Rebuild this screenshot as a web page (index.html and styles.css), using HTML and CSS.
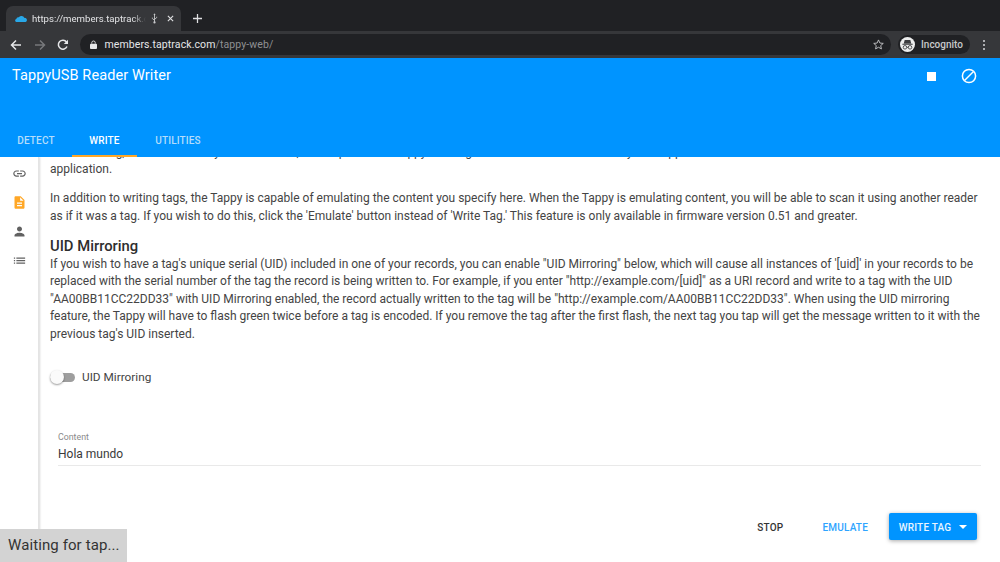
FILE: index.html
```html
<!DOCTYPE html>
<html lang="en">
<head>
<meta charset="utf-8">
<title>TappyUSB Reader Writer</title>
<link rel="stylesheet" href="styles.css">
</head>
<body>
<div class="chrome">
  <div class="tabstrip">
    <div class="tab">
      <svg class="favicon" viewBox="0 0 14 8"><path d="M1.500 8a1.800 1.800 0 0 1 0-3.500 2.500 2.500 0 0 1 3-2 4 4 0 0 1 6.500.8A2.500 2.500 0 0 1 12.500 8z" fill="#29a8e8"/></svg>
      <span class="tab-title">https://members.taptrack.com</span>
      <svg class="usb" viewBox="0 0 8 12"><path d="M4 1v10M4 8 1.500 6V5M4 7l2.500-2V4" fill="none" stroke="#c9cacc" stroke-width="1"/><circle cx="4" cy="10.500" r="1.300" fill="#c9cacc"/><path d="M4 0 2.800 2h2.400z" fill="#c9cacc"/></svg>
      <svg class="tab-x" viewBox="0 0 8 8"><path d="M1 1l6 6M7 1 1 7" stroke="#dfe0e2" stroke-width="1.300"/></svg>
    </div>
    <svg class="newtab" viewBox="0 0 10 10"><path d="M5 0v10M0 5h10" stroke="#dfe0e2" stroke-width="1.400"/></svg>
  </div>
  <div class="toolbar">
    <svg class="nav" viewBox="0 0 12 12"><path d="M11 6H2M6 1.500 1.500 6 6 10.500" fill="none" stroke="#e6e7e9" stroke-width="1.500"/></svg>
    <svg class="nav" viewBox="0 0 12 12"><path d="M1 6h9M6 1.500 10.500 6 6 10.500" fill="none" stroke="#77787b" stroke-width="1.500"/></svg>
    <svg class="nav" viewBox="0 0 12 12"><path d="M10 7.500A4.500 4.500 0 1 1 9.500 3" fill="none" stroke="#e6e7e9" stroke-width="1.500"/><path d="M11 .8V5H6.800z" fill="#e6e7e9"/></svg>
    <div class="omnibox">
      <svg class="lock" viewBox="0 0 8 10"><path d="M2 4V3a2 2 0 0 1 4 0v1" fill="none" stroke="#e6e7e9"/><rect y="4" width="8" height="6" rx="1" fill="#e6e7e9"/></svg>
      <span class="url">members.taptrack.com<span class="url-path">/tappy-web/</span></span>
      <svg class="star" viewBox="0 0 12 12"><path d="M6 1l1.500 3.400 3.700.4-2.800 2.400.8 3.600L6 9l-3.200 1.800.8-3.600L.8 4.800l3.700-.4z" fill="none" stroke="#c5c6c8"/></svg>
    </div>
    <div class="incognito">
      <span class="inc-badge"><svg viewBox="0 0 16 16"><path d="M2.500 7.200h11v1h-11zM5 3.200h6l1 3.600H4z" fill="#3a3b3e"/><circle cx="5.300" cy="11" r="1.900" fill="none" stroke="#3a3b3e" stroke-width=".9"/><circle cx="10.700" cy="11" r="1.900" fill="none" stroke="#3a3b3e" stroke-width=".9"/><path d="M7.200 11h1.600" stroke="#3a3b3e" stroke-width=".9"/></svg></span>
      <span class="inc-label">Incognito</span>
    </div>
    <div class="menu-dots"><i></i><i></i><i></i></div>
  </div>
</div>

<header class="appbar">
  <div class="appbar-top">
    <h1 class="app-title">TappyUSB Reader Writer</h1>
    <div class="app-actions">
      <span class="stop-square"></span>
      <svg class="ban" viewBox="0 0 16 16"><circle cx="8" cy="8" r="6.600" fill="none" stroke="#fff" stroke-width="1.500"/><path d="M3.500 12.500l9-9" stroke="#fff" stroke-width="1.500"/></svg>
    </div>
  </div>
  <nav class="tabs">
    <span class="app-tab tab-detect">DETECT</span>
    <span class="app-tab tab-write">WRITE</span>
    <span class="app-tab tab-utilities">UTILITIES</span>
  </nav>
</header>

<div class="workspace">
  <aside class="rail">
    <svg class="rail-icon" viewBox="0 0 24 24"><path d="M3.900 12c0-1.710 1.390-3.100 3.100-3.100h4V7H7c-2.760 0-5 2.240-5 5s2.240 5 5 5h4v-1.900H7c-1.710 0-3.100-1.390-3.100-3.100zM8 13h8v-2H8v2zm9-6h-4v1.900h4c1.710 0 3.100 1.390 3.100 3.100s-1.390 3.100-3.100 3.100h-4V17h4c2.760 0 5-2.240 5-5s-2.240-5-5-5z" fill="#616161"/></svg>
    <svg class="rail-icon" viewBox="0 0 24 24"><path d="M14 2H6c-1.100 0-2 .9-2 2v16c0 1.100.9 2 2 2h12c1.100 0 2-.9 2-2V8l-6-6zm2 16H8v-2h8v2zm0-4H8v-2h8v2zm-3-5V3.500L18.500 9H13z" fill="#ffa726"/></svg>
    <svg class="rail-icon" viewBox="0 0 24 24"><path d="M12 12c2.210 0 4-1.790 4-4s-1.790-4-4-4-4 1.790-4 4 1.790 4 4 4zm0 2c-2.670 0-8 1.340-8 4v2h16v-2c0-2.660-5.330-4-8-4z" fill="#616161"/></svg>
    <svg class="rail-icon" viewBox="0 0 24 24"><path d="M3 13h2v-2H3v2zm0 4h2v-2H3v2zm0-8h2V7H3v2zm4 4h14v-2H7v2zm0 4h14v-2H7v2zM7 7v2h14V7H7z" fill="#616161"/></svg>
  </aside>
  <main class="content">
    <div class="clip-top">
      <p class="para clipped">To write a tag, add the content you want below, then tap it on the Tappy. The tag can then be scanned with any NFC application.</p>
      <p class="para">application.</p>
    </div>
    <p class="para para-gap">In addition to writing tags, the Tappy is capable of emulating the content you specify here. When the Tappy is emulating content, you will be able to scan it using another reader as if it was a tag. If you wish to do this, click the 'Emulate' button instead of 'Write Tag.' This feature is only available in firmware version 0.51 and greater.</p>
    <h2 class="section-title">UID Mirroring</h2>
    <p class="para">If you wish to have a tag's unique serial (UID) included in one of your records, you can enable "UID Mirroring" below, which will cause all instances of '[uid]' in your records to be replaced with the serial number of the tag the record is being written to. For example, if you enter "http://example.com/[uid]" as a URI record and write to a tag with the UID "AA00BB11CC22DD33" with UID Mirroring enabled, the record actually written to the tag will be "http://example.com/AA00BB11CC22DD33". When using the UID mirroring feature, the Tappy will have to flash green twice before a tag is encoded. If you remove the tag after the first flash, the next tag you tap will get the message written to it with the previous tag's UID inserted.</p>
    <div class="switch-row">
      <span class="switch"><span class="track"></span><span class="thumb"></span></span>
      <span class="switch-label">UID Mirroring</span>
    </div>
    <div class="field">
      <label class="field-label">Content</label>
      <div class="field-value">Hola mundo</div>
    </div>
    <div class="actions">
      <span class="btn btn-stop">STOP</span>
      <span class="btn btn-emulate">EMULATE</span>
      <span class="btn-primary">WRITE TAG<i class="caret"></i></span>
    </div>
  </main>
</div>
<div class="toast">Waiting for tap...</div>
</body>
</html>
```
FILE: styles.css
```css
* { box-sizing: border-box; }
html, body { margin: 0; height: 100%; overflow: hidden; }
body { width: 1000px; height: 562px; font-family: Roboto, "Liberation Sans", sans-serif; background: #fff; color: #3c3c3c; display: flex; flex-direction: column; }

.chrome { height: 58px; background: #202124; flex: none; }
.tabstrip { height: 31px; display: flex; align-items: flex-end; padding-left: 6px; }
.tab { width: 175px; height: 25px; background: #36373a; border-radius: 7px 7px 0 0; display: flex; align-items: center; padding-left: 9px; }
.favicon { width: 12px; height: 7px; flex: none; }
.tab-title { width: 114px; margin-left: 5px; font-size: 9.600px; color: #e3e4e6; white-space: nowrap; overflow: hidden; -webkit-mask-image: linear-gradient(90deg, #000 88%, transparent); mask-image: linear-gradient(90deg, #000 88%, transparent); }
.usb { width: 7px; height: 11px; margin-left: 5px; flex: none; }
.tab-x { width: 7px; height: 7px; margin-left: 9px; flex: none; }
.newtab { width: 9px; height: 9px; margin: 0 0 8px 12px; }

.toolbar { height: 27px; background: #36373a; display: flex; align-items: center; padding-left: 10px; }
.nav { width: 12px; height: 12px; margin-right: 11.500px; flex: none; }
.omnibox { width: 811px; height: 21px; margin-left: -1px; background: #202124; border-radius: 11px; display: flex; align-items: center; padding-left: 10px; }
.lock { width: 7px; height: 9px; flex: none; }
.url { margin-left: 8px; font-size: 10.500px; color: #e6e7e9; flex: 1; white-space: nowrap; letter-spacing: .1px; }
.url-path { color: #8f9093; }
.star { width: 11px; height: 11px; margin-right: 7px; margin-left: 2px; }
.incognito { width: 72px; height: 19px; margin-left: 7px; background: #202124; border-radius: 10px; display: flex; align-items: center; padding-left: 2px; flex: none; }
.inc-badge { width: 15px; height: 15px; border-radius: 50%; background: #eceded; display: flex; flex: none; }
.inc-label { margin-left: 6.500px; font-size: 10px; color: #c8c9cb; font-weight: 500; }
.menu-dots { margin-left: 13.500px; display: flex; flex-direction: column; gap: 2px; }
.menu-dots i { width: 2px; height: 2px; border-radius: 50%; background: #d5d6d8; }

.appbar { height: 99px; flex: none; background: #0094ff; color: #fff; display: flex; flex-direction: column; justify-content: space-between; position: relative; z-index: 1; }
.appbar-top { display: flex; justify-content: space-between; align-items: center; padding: 8px 23px 0 12px; }
.app-title { margin: 0; font-size: 14.500px; font-weight: 400; letter-spacing: .1px; line-height: 20px; }
.app-actions { display: flex; align-items: center; gap: 25px; }
.stop-square { width: 9px; height: 9px; background: #fff; }
.ban { width: 16px; height: 16px; }
.tabs { display: flex; height: 34px; }
.app-tab { display: flex; align-items: center; justify-content: center; font-size: 10px; font-weight: 500; letter-spacing: .15px; color: #b4ddfb; }
.tab-detect { width: 72px; }
.tab-write { width: 65px; color: #fff; border-bottom: 2px solid #ffa726; padding-top: 2px; }
.tab-utilities { width: 82px; }

.workspace { flex: 1; display: flex; min-height: 0; }
.rail { width: 39px; flex: none; border-right: 1px solid #e4e4e4; box-shadow: 1px 0 2px rgba(0,0,0,.15); display: flex; flex-direction: column; align-items: center; gap: 14px; padding: 8.500px 0 0 0; }
.rail-icon { width: 15px; height: 15px; flex: none; }
.content { flex: 1; padding: 0 19px 0 11px; min-width: 0; }
.clip-top { height: 21.750px; display: flex; flex-direction: column; justify-content: flex-end; overflow: hidden; }
.para { margin: 0; font-size: 12px; line-height: 17.500px; color: #444; flex: none; }
.clipped { white-space: nowrap; }
.para-gap { margin-top: 11.500px; }
.section-title { margin: 13px 0 0; font-size: 14.800px; font-weight: 500; line-height: 17.500px; color: #2e2e2e; }
.switch-row { display: flex; align-items: center; margin-top: 23.750px; height: 20px; }
.switch { width: 26px; height: 14px; flex: none; display: flex; align-items: center; }
.track { display: block; width: 25px; height: 9px; border-radius: 5px; background: #9e9e9e; flex: none; }
.thumb { display: block; width: 14px; height: 14px; border-radius: 50%; background: #fafafa; box-shadow: 0 1px 2px rgba(0,0,0,.4); margin-left: -25px; flex: none; }
.switch-label { margin-left: 6px; font-size: 11.800px; color: #444; }
.field { margin: 44px 0 0 8px; border-bottom: 1px solid #e9e9e9; height: 35px; }
.field-label { display: block; font-size: 8.800px; line-height: 12px; color: #8a8a8a; }
.field-value { font-size: 12px; line-height: 21px; padding-top: 1px; color: #3a3a3a; }
.actions { display: flex; align-items: center; justify-content: flex-end; margin-top: 47px; padding-right: 4px; }
.btn { font-size: 10px; font-weight: 500; letter-spacing: .2px; padding-top: 1px; }
.btn-stop { color: #333; margin-right: 39px; }
.btn-emulate { color: #2ea4ff; margin-right: 21px; }
.btn-primary { width: 88px; height: 27px; padding-top: 1px; background: #0094ff; color: #e9f5ff; border-radius: 2px; box-shadow: 0 1px 4px rgba(0,0,0,.35); font-size: 10px; font-weight: 500; letter-spacing: .2px; display: flex; align-items: center; justify-content: center; }
.caret { width: 0; height: 0; margin-left: 8px; border-left: 4px solid transparent; border-right: 4px solid transparent; border-top: 4px solid #fff; }
.toast { position: absolute; left: 0; bottom: 0; width: 127px; height: 33px; background: #d3d3d3; color: #333; font-size: 15px; line-height: 33px; padding-left: 8px; letter-spacing: .1px; }
```
